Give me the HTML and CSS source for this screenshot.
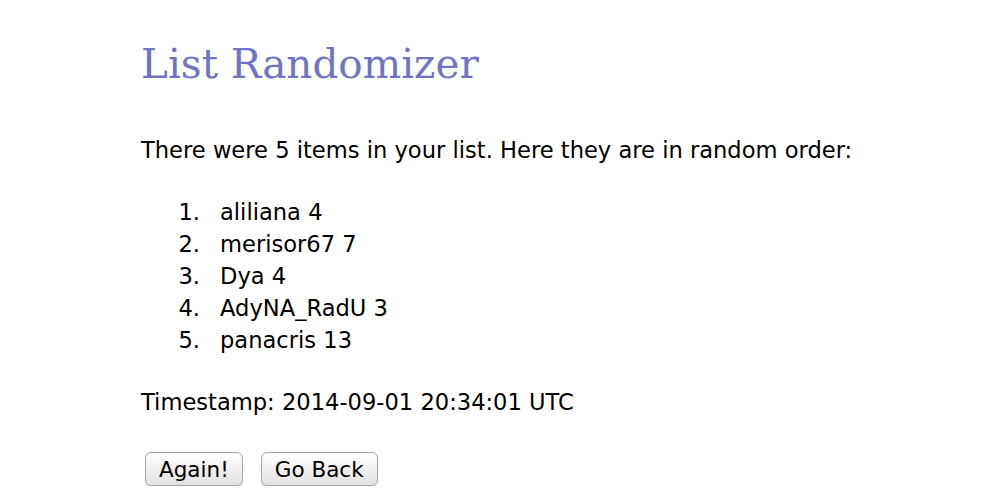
FILE: index.html
```html
<!DOCTYPE html>
<html lang="en">
<head>
  <meta charset="UTF-8" />
  <title>List Randomizer</title>
  <link rel="stylesheet" href="styles.css">
</head>
<body>
<div class="container">
  <h1>List Randomizer</h1>
  <p>There were 5 items in your list. Here they are in random order:</p>
  <ol class="result">
    <li>aliliana 4</li>
    <li>merisor67 7</li>
    <li>Dya 4</li>
    <li>AdyNA_RadU 3</li>
    <li>panacris 13</li>
  </ol>
  <p>Timestamp: 2014-09-01 20:34:01 UTC</p>
  <form class="actions">
    <button type="button">Again!</button>
    <button type="button">Go Back</button>
  </form>
</div>
</body>
</html>
```

FILE: styles.css
```css
body { margin: 0; background: white; color: black; font-family: "DejaVu Sans", Verdana, sans-serif; font-size: 22.6px; }
.container { padding: 36px 0 0 141px; }
h1 { font-family: "DejaVu Serif", Georgia, serif; font-weight: normal; color: #7373c5; font-size: 40.5px; margin: 0 0 42px 0; line-height: 56px; }
p { margin: 0; line-height: 32px; }
.result { margin: 30px 0 30px 0; padding-left: 79px; line-height: 32px; list-style: none; counter-reset: item; }
.result li { counter-increment: item; }
.result li::before { content: counter(item) "."; display: inline-block; width: 30px; margin-left: -50px; margin-right: 20px; text-align: right; }
.actions { margin-top: 34px; display: flex; gap: 18px; padding-left: 4px; }
.actions button { font-family: inherit; font-size: 21.5px; height: 34px; padding: 0 13px; border: 1px solid #a6a6a6; border-radius: 6px; background: linear-gradient(#ffffff, #f0f0f0 50%, #e2e2e2); box-shadow: 0 1px 1px rgba(0,0,0,0.15); color: black; }
```
